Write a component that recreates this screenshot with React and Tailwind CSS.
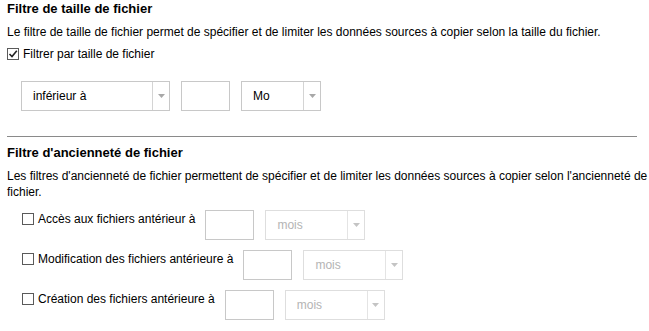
import React from 'react';

function Arrow({ muted }) {
  return (
    <svg width="7" height="4" viewBox="0 0 7 4">
      <path d="M0 0 H7 L3.5 4 Z" fill={muted ? '#c4c4c4' : '#a8a8a8'} />
    </svg>
  );
}

function Select({ value, width, muted }) {
  return (
    <div
      className={`flex h-[30px] border ${muted ? 'border-[#dedede]' : 'border-[#c8c8c8]'} bg-white`}
      style={{ width }}
    >
      <div className={`flex-1 flex items-center pl-[11px] ${muted ? 'text-[#b4b4b4]' : 'text-black'}`}>{value}</div>
      <div className={`w-[17px] flex items-center justify-center border-l ${muted ? 'border-[#e4e4e4]' : 'border-[#d4d4d4]'}`}>
        <Arrow muted={muted} />
      </div>
    </div>
  );
}

function Box() {
  return <div className="w-[49px] h-[30px] border border-[#c8c8c8] bg-white" />;
}

function Check({ checked }) {
  return (
    <div className="w-[12px] h-[12px] border border-[#5a5a5a] bg-white flex items-center justify-center shrink-0">
      {checked && (
        <svg width="10" height="10" viewBox="0 0 10 10">
          <path d="M1.5 5 L4 7.5 L8.8 1.8" stroke="#222" strokeWidth="1.6" fill="none" />
        </svg>
      )}
    </div>
  );
}

function AgeRow({ label }) {
  return (
    <div className="flex items-start h-[40px] pl-[22px]">
      <div className="flex items-center h-[16px] mt-[1px]">
        <Check />
        <span className="ml-[4px]">{label}</span>
      </div>
      <div className="ml-[10px] flex gap-[11px]">
        <Box />
        <Select value="mois" width="100px" muted />
      </div>
    </div>
  );
}

export default function App() {
  return (
    <div className="w-[649px] h-[331px] overflow-hidden bg-white text-black text-[12px] leading-[16px] font-['Liberation_Sans',Arial,sans-serif]">
      <div className="pl-[7px] pt-[1px]">
        <h2 className="font-bold text-[13px] h-[16px]">Filtre de taille de fichier</h2>
        <p className="mt-[7px] whitespace-nowrap">
          Le filtre de taille de fichier permet de spécifier et de limiter les données sources à copier selon la taille du fichier.
        </p>
        <div className="mt-[6px] flex items-center h-[16px]">
          <Check checked />
          <span className="ml-[4px]">Filtrer par taille de fichier</span>
        </div>
        <div className="mt-[19px] ml-[14px] flex gap-[11px]">
          <Select value="inférieur à" width="149px" />
          <Box />
          <Select value="Mo" width="80px" />
        </div>
      </div>
      <hr className="mt-[25px] ml-[7px] w-[630px] border-t border-[#8a8a8a]" />
      <div className="pl-[7px]">
        <h2 className="mt-[8px] font-bold text-[13px] h-[16px]">Filtre d'ancienneté de fichier</h2>
        <p className="mt-[7px] whitespace-nowrap">
          Les filtres d'ancienneté de fichier permettent de spécifier et de limiter les données sources à copier selon l'ancienneté de
          <br />
          fichier.
        </p>
      </div>
      <div className="mt-[10px]">
        <AgeRow label="Accès aux fichiers antérieur à" />
        <AgeRow label="Modification des fichiers antérieure à" />
        <AgeRow label="Création des fichiers antérieure à" />
      </div>
    </div>
  );
}
